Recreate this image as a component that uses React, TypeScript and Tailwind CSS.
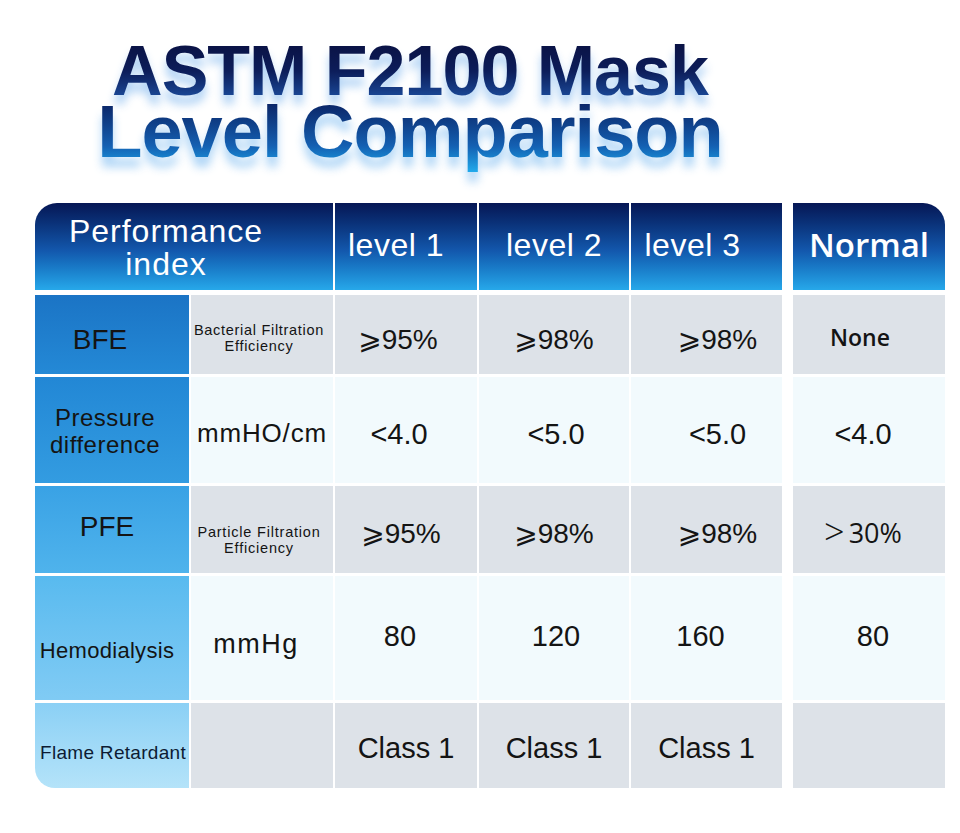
import React from 'react';

const base = "font-['Liberation_Sans','DejaVu_Sans',Arial,sans-serif]";
const open = "font-['Open_Sans','Liberation_Sans',sans-serif]";

const headBg =
  'bg-linear-to-b from-[#061755] via-[#1358ad] via-55% to-[#27a8ea]';
const grey = 'bg-[#dde2e8]';
const pale = 'bg-[#f2fafd]';

function Cell({ className = '', children }: { className?: string; children?: React.ReactNode }) {
  return (
    <div className={`flex items-center justify-center text-center text-[#141414] ${className}`}>
      {children}
    </div>
  );
}

export default function App() {
  return (
    <div className={`w-[960px] h-[833px] bg-white overflow-hidden ${base}`}>
      {/* title */}
      <div className="w-[820px] pt-[43px] text-center font-bold">
        <div className="drop-shadow-[0_9px_5px_rgba(70,150,230,0.45)]">
          <div className="text-[70px] leading-[56px] tracking-[-1px] bg-linear-to-b from-[#0a1244] via-[#0c1d5a] to-[#1c4c9c] bg-clip-text text-transparent">
            ASTM F2100 Mask
          </div>
        </div>
        <div className="mt-[5px] drop-shadow-[0_10px_5px_rgba(70,160,235,0.45)]">
          <div className="text-[74px] leading-[56px] pb-[14px] tracking-[-1px] bg-linear-to-b from-[#0b2668] via-[#1460b2] via-60% to-[#22b0f0] bg-clip-text text-transparent">
            Level Comparison
          </div>
        </div>
      </div>

      {/* table */}
      <div className="ml-[35px] mt-[29px] grid grid-cols-[154px_142px_142px_150px_151px_161px] grid-rows-[89px_79px_106px_87px_124px_85px] gap-x-[2px] gap-y-[3px]">
        {/* header */}
        <div
          className={`col-span-2 h-[87px] rounded-tl-[22px] ${headBg} flex flex-col items-center justify-center pr-[36px] pt-[2px] text-white text-[32px] leading-[33px] tracking-[1px]`}
        >
          <span>Performance</span>
          <span>index</span>
        </div>
        <div className={`h-[87px] ${headBg} flex items-center justify-center pr-[20px] pb-[4px] text-white text-[32px] tracking-[0.5px]`}>
          level 1
        </div>
        <div className={`h-[87px] ${headBg} flex items-center justify-center pb-[4px] text-white text-[32px] tracking-[0.5px]`}>
          level 2
        </div>
        <div className={`h-[87px] ${headBg} flex items-center justify-center pr-[28px] pb-[4px] text-white text-[32px] tracking-[0.5px]`}>
          level 3
        </div>
        <div className={`h-[87px] ml-[9px] rounded-tr-[22px] ${headBg} flex items-center justify-center pb-[4px] text-white text-[33px] font-semibold ${open}`}>
          Normal
        </div>

        {/* BFE */}
        <Cell className="bg-linear-to-b from-[#1b74c5] to-[#2489d6] pr-[24px] pt-[10px] text-[28px] text-[#0d1b33]">BFE</Cell>
        <Cell className={`${grey} flex-col pr-[6px] pt-[6px] text-[14.5px] leading-[16px] tracking-[0.7px]`}>
          <span>Bacterial Filtration</span>
          <span>Efficiency</span>
        </Cell>
        <Cell className={`${grey} pr-[16px] pt-[10px] text-[28px]`}>⩾95%</Cell>
        <Cell className={`${grey} pt-[10px] text-[28px]`}>⩾98%</Cell>
        <Cell className={`${grey} pl-[22px] pt-[10px] text-[28px]`}>⩾98%</Cell>
        <Cell className={`${grey} ml-[9px] pr-[18px] pt-[6px] text-[23px] font-semibold text-[#111] ${open}`}>None</Cell>

        {/* Pressure difference */}
        <Cell className="bg-linear-to-b from-[#2287d5] to-[#339ce1] flex-col pr-[14px] pt-[2px] text-[24px] leading-[27px] tracking-[0.5px] text-[#0d1b33]">
          <span>Pressure</span>
          <span>difference</span>
        </Cell>
        <Cell className={`${pale} pt-[6px] text-[26px] tracking-[0.8px]`}>mmHO/cm</Cell>
        <Cell className={`${pale} pr-[14px] pt-[10px] text-[29px]`}>&lt;4.0</Cell>
        <Cell className={`${pale} pl-[4px] pt-[10px] text-[29px]`}>&lt;5.0</Cell>
        <Cell className={`${pale} pl-[22px] pt-[10px] text-[29px]`}>&lt;5.0</Cell>
        <Cell className={`${pale} ml-[9px] pr-[12px] pt-[10px] text-[29px]`}>&lt;4.0</Cell>

        {/* PFE */}
        <Cell className="bg-linear-to-b from-[#39a2e5] to-[#4fb3ec] pr-[10px] pb-[5px] text-[28px] text-[#0d1b33]">PFE</Cell>
        <Cell className={`${grey} flex-col pr-[6px] pt-[20px] text-[14.5px] leading-[16px] tracking-[0.8px]`}>
          <span>Particle Filtration</span>
          <span>Efficiency</span>
        </Cell>
        <Cell className={`${grey} pr-[10px] pt-[8px] text-[28px]`}>⩾95%</Cell>
        <Cell className={`${grey} pt-[8px] text-[28px]`}>⩾98%</Cell>
        <Cell className={`${grey} pl-[22px] pt-[8px] text-[28px]`}>⩾98%</Cell>
        <Cell className={`${grey} ml-[9px] pr-[12px] pt-[8px] text-[27px] font-medium text-[#111] ${open}`}>
          <span className="mr-[4px] font-light text-[36px] leading-none -mt-[4px]">&gt;</span>30%
        </Cell>

        {/* Hemodialysis */}
        <Cell className="bg-linear-to-b from-[#58baef] to-[#80cbf4] pr-[10px] pt-[24px] text-[22px] tracking-[0.3px] text-[#0d1b33]">
          Hemodialysis
        </Cell>
        <Cell className={`${pale} pr-[12px] pt-[12px] text-[27px] tracking-[1.5px]`}>mmHg</Cell>
        <Cell className={`${pale} pr-[12px] pb-[2px] text-[29px]`}>80</Cell>
        <Cell className={`${pale} pl-[4px] pb-[2px] text-[29px]`}>120</Cell>
        <Cell className={`${pale} pr-[12px] pb-[2px] text-[29px]`}>160</Cell>
        <Cell className={`${pale} ml-[9px] pl-[8px] pb-[2px] text-[29px]`}>80</Cell>

        {/* Flame Retardant */}
        <div className="flex items-center justify-start pl-[5px] pt-[15px] rounded-bl-[20px] bg-linear-to-b from-[#8bd0f5] to-[#b4e3f9] text-[19px] tracking-[0.3px] text-[#0d1b33] whitespace-nowrap">
          Flame Retardant
        </div>
        <Cell className={grey} />
        <Cell className={`${grey} pt-[6px] text-[29px]`}>Class 1</Cell>
        <Cell className={`${grey} pt-[6px] text-[29px]`}>Class 1</Cell>
        <Cell className={`${grey} pt-[6px] text-[29px]`}>Class 1</Cell>
        <Cell className={`${grey} ml-[9px]`} />
      </div>
    </div>
  );
}
